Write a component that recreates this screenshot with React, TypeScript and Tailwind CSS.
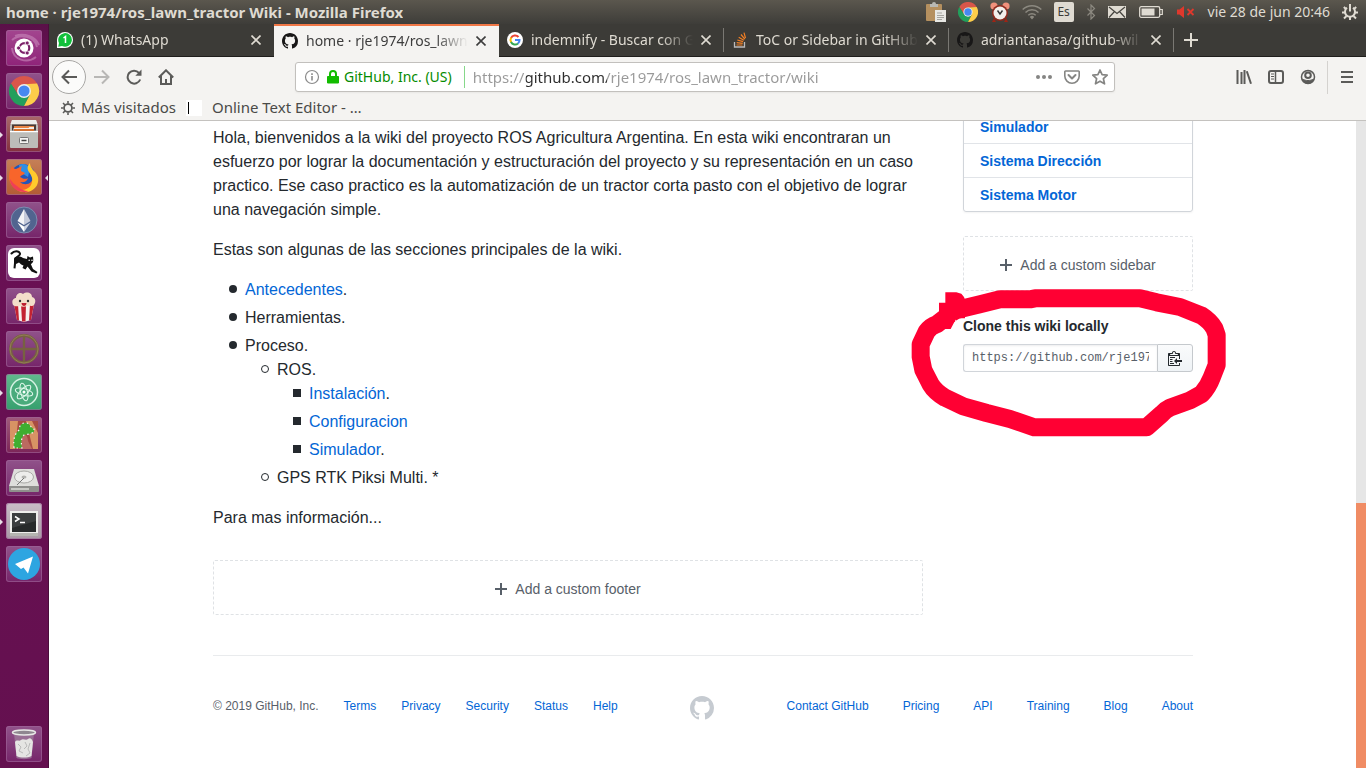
import React from "react";

const CHROME_FONT = "font-['Noto_Sans',sans-serif]";
const PAGE_FONT = "font-['Liberation_Sans',Arial,sans-serif]";

const MARK =
  "M8 0C3.58 0 0 3.58 0 8c0 3.54 2.29 6.53 5.47 7.59.4.07.55-.17.55-.38 0-.19-.01-.82-.01-1.49-2.01.37-2.53-.49-2.69-.94-.09-.23-.48-.94-.82-1.13-.28-.15-.68-.52-.01-.53.63-.01 1.08.58 1.23.82.72 1.21 1.87.87 2.33.66.07-.52.28-.87.51-1.07-1.78-.2-3.64-.89-3.64-3.95 0-.87.31-1.59.82-2.15-.08-.2-.36-1.02.08-2.12 0 0 .67-.21 2.2.82.64-.18 1.32-.27 2-.27.68 0 1.36.09 2 .27 1.53-1.04 2.2-.82 2.2-.82.44 1.1.16 1.92.08 2.12.51.56.82 1.27.82 2.15 0 3.07-1.87 3.75-3.65 3.95.29.25.54.73.54 1.48 0 1.07-.01 1.93-.01 2.2 0 .21.15.46.55.38A8.013 8.013 0 0 0 16 8c0-4.42-3.58-8-8-8z";

function GitHubMark({ className }: { className: string }) {
  return (
    <svg viewBox="0 0 16 16" fill="currentColor" className={className} aria-hidden="true">
      <path d={MARK} />
    </svg>
  );
}

function ChromeShapes() {
  return (
    <>
      <path d="M2.100 8A16 16 0 0 1 29.900 8L30 8.700H16L9.600 19.700z" fill="#d9564a" />
      <path d="M2.100 8 9.600 19.700 22.400 19.700 16 32A16 16 0 0 1 2.100 8z" fill="#229f5c" />
      <path d="M22.400 19.700 16 32A16 16 0 0 0 29.900 8L16 8.700z" fill="#fdcd4a" />
      <circle cx="16" cy="16" r="7.400" fill="#eee" />
      <circle cx="16" cy="16" r="5.900" fill="#4688f1" />
    </>
  );
}

/* ---------- system panel ---------- */

function SystemPanel() {
  return (
    <header className={`flex h-6 shrink-0 items-center justify-between bg-linear-to-b from-[#5b574e] to-[#3e3d39] pr-2 pl-1.5 text-[#dfdbd2] ${CHROME_FONT}`}>
      <h1 className="truncate text-[15px] leading-6 font-bold">home · rje1974/ros_lawn_tractor Wiki - Mozilla Firefox</h1>
      <div className="flex shrink-0 items-center gap-3">
        <svg viewBox="0 0 20 20" className="size-5">
          <rect x="0" y="2" width="16" height="17" rx="1" fill="#b5905f" />
          <path d="M4 2h2a2 2 0 0 1 4 0h2v3H4z" fill="#b9b9b4" />
          <rect x="9" y="8" width="11" height="12" fill="#e8e8e4" />
          <path d="M11 11h5M11 13.500h7M11 15.500h7M11 17.500h5" stroke="#a5a5a0" />
        </svg>
        <svg viewBox="0 0 32 32" className="size-5">
          <ChromeShapes />
        </svg>
        <svg viewBox="0 0 20 20" className="size-5">
          <circle cx="4" cy="4" r="3.600" fill="#f0917c" />
          <circle cx="16" cy="4" r="3.600" fill="#f0917c" />
          <path d="m4 16-2 4h4zM16 16l2 4h-4z" fill="#9d2415" />
          <circle cx="10" cy="11" r="8" fill="#8e2a1d" />
          <circle cx="10" cy="11" r="6.500" fill="#f3f0ec" />
          <path d="m7.500 8.500 2.500 3.500 2.500-3.500" stroke="#333" strokeWidth="1.400" fill="none" />
        </svg>
        <svg viewBox="0 0 20 16" className="h-4 w-5" fill="none" stroke="#8c8980" strokeWidth="1.500">
          <path d="M.7 5.500a13.500 13.500 0 0 1 18.600 0M3.500 8.500a9.300 9.300 0 0 1 13 0M6.300 11.300a5.300 5.300 0 0 1 7.400 0" />
          <path d="M10 15.500 7.800 13a3 3 0 0 1 4.400 0z" fill="#8c8980" stroke="none" />
        </svg>
        <button className="h-5 w-5 rounded-xs bg-[#dfdbd2] text-xs text-[#3c3b37]">Es</button>
        <svg viewBox="0 0 10 16" className="h-4 w-2.5" fill="none" stroke="#8c8980" strokeWidth="1.200">
          <path d="m1.500 4.500 7 7L5 15V1l3.500 3.500-7 7" />
        </svg>
        <svg viewBox="0 0 18 14" className="h-3.5 w-[18px]">
          <path d="M0 1h18v12H0z" fill="#dfdbd2" />
          <path d="m1 2 8 6.500L17 2M1 12.500l5.500-6M17 12.500l-5.500-6" fill="none" stroke="#45443f" strokeWidth="1.200" />
        </svg>
        <svg viewBox="0 0 24 12" className="mx-px h-3 w-6">
          <rect x=".7" y=".7" width="20" height="10.600" rx="1.500" fill="none" stroke="#dfdbd2" strokeWidth="1.300" />
          <path d="M2.500 2.500h13v7h-13z" fill="#dfdbd2" />
          <path d="M21 3.500h2.300v5H21" fill="none" stroke="#dfdbd2" strokeWidth="1.200" />
        </svg>
        <svg viewBox="0 0 20 14" className="h-3.5 w-5" fill="#df382c">
          <path d="M1 4.500h2.500L8 1v12L3.500 9.500H1z" />
          <path d="m11.500 4 6 6m0-6-6 6" stroke="#df382c" strokeWidth="1.800" />
        </svg>
        <time className="text-sm">vie 28 de jun 20:46</time>
        <svg viewBox="0 0 16 16" className="size-4" fill="none" stroke="#dfdbd2">
          <path d="M5 3.700a5 5 0 1 0 6 0" strokeWidth="2" />
          <path d="M8 0v7.500" strokeWidth="2" />
          <path d="M0 8.500h3M13 8.500h3M2 14.500l2.500-2.500M14 14.500 11.500 12M8 13v3M1.800 3 4 5M14.200 3 12 5" strokeWidth="2" />
        </svg>
      </div>
    </header>
  );
}

/* ---------- launcher ---------- */

type App = { name: string; tile: string; running?: boolean; focused?: boolean; art: React.ReactNode };

const GLASS = "bg-linear-to-b from-[#90528a] to-[#76256a]";

const APPS: App[] = [
  {
    name: "Dash",
    tile: "bg-linear-to-b from-[#a3458f] to-[#8f2379]",
    art: (
      <>
        <path d="M6 10C14 3 29 6 31 17M30 27C21 34 7 30 6 18M9 6c9-3 20 0 24 9" stroke="#c98abd" strokeWidth="2" fill="none" opacity=".6" />
        <circle cx="18" cy="18" r="9.500" fill="#fff" />
        <circle cx="18.500" cy="18" r="4.800" fill="none" stroke="#7a1f68" strokeWidth="2.200" />
        <g fill="#7a1f68" stroke="#fff" strokeWidth=".9">
          <circle cx="12.600" cy="18" r="2.100" />
          <circle cx="21.200" cy="13" r="2.100" />
          <circle cx="21.200" cy="23" r="2.100" />
        </g>
      </>
    ),
  },
  {
    name: "Google Chrome",
    tile: GLASS,
    art: (
      <g transform="translate(3 3) scale(.94)">
        <ChromeShapes />
      </g>
    ),
  },
  {
    name: "Archivos",
    tile: "bg-linear-to-b from-[#a8676a] to-[#84303f]",
    running: true,
    art: (
      <>
        <path d="M6 4h24l2 6v21a1 1 0 0 1-1 1H5a1 1 0 0 1-1-1V10z" fill="#bdbdb9" />
        <path d="M6 4h24l1.500 4h-27z" fill="#ecece9" />
        <path d="M6 8.500h24v6H6z" fill="#4b3b36" />
        <path d="M8 10h20v3H8z" fill="#e98545" />
        <path d="M7.500 12h15l1-1H28v3.500H7.500z" fill="#f5efe8" />
        <path d="M8 13h20v2H8z" fill="#d4702f" />
        <path d="M4 15h28v1.200H4z" fill="#fff" />
        <rect x="13.500" y="21.500" width="9" height="6" rx="1" fill="#f4f4f2" stroke="#777" />
        <path d="M15.500 24.500h5" stroke="#444" strokeWidth="1.500" />
      </>
    ),
  },
  {
    name: "Firefox",
    tile: "bg-linear-to-b from-[#c58057] to-[#b35b35]",
    running: true,
    focused: true,
    art: (
      <>
        <circle cx="17" cy="17" r="12" fill="#2456b8" />
        <path d="M13 6c4-2 8-1 11 3l-2 9-8-5z" fill="#2f8fe6" />
        <path d="M6 7c1 2 2 3 4 3 2-1 4-2 6-3-1 2-1 4-1 5l4 2c-1 2-4 2-5 4 2 1 5 3 8 1-1 4-5 5-8 4 3 3 8 3 11 0 3-3 3-8 1-12 6 3 8 13-2 20-12 4-21-4-21-13 0-4 1-8 3-11z" fill="#f8652b" />
        <path d="M24 4c0 3 1 4 3 7 4 4 6 7 5 12-1 6-7 11-14 10-3 0-5-1-7-2 8 1 14-2 15-8 1-4-1-7-3-10s-2-6 1-9z" fill="#ffca2c" />
        <path d="M4 20c0 7 6 13 14 13 2 0 4-.5 5-1-5 0-9-2-12-5-3-2-5-4-7-7z" fill="#ef3f56" />
      </>
    ),
  },
  {
    name: "Ethereum",
    tile: GLASS,
    art: (
      <>
        <circle cx="18" cy="18" r="13" fill="#51648f" stroke="#7e8bb0" />
        <path d="M18 7v16l-6.500-4z" fill="#f3f3f6" />
        <path d="M18 7v16l6.500-4z" fill="#c5cada" />
        <path d="M11.500 20.500 18 24.500V30z" fill="#fff" />
        <path d="M24.500 20.500 18 24.500V30z" fill="#cfd4e2" />
      </>
    ),
  },
  {
    name: "Gato",
    tile: GLASS,
    art: (
      <>
        <rect x="2" y="3" width="32" height="30" rx="6" fill="#fff" />
        <path d="M5.500 8.500C8 5.500 13 5.500 14 8.500c.5 3-5 3-5 6" fill="none" stroke="#111" strokeWidth="2" strokeLinecap="round" />
        <path d="M8 14c1-3 6-3 9-1l4 1 .5-3 2.500 1.500 3-1 .3 3.500c0 2-1 3.500-2.500 4l2.200 5 4.500 3-1 1.500-5-2-4-5-2 3-3-1.500 1-2.500c-2-.5-3.500-2-4.500-3l-3 1.500-.5 4.500-2-.2.500-5.300z" fill="#111" />
        <circle cx="23.200" cy="15.300" r=".8" fill="#fff" />
        <circle cx="26" cy="15.300" r=".8" fill="#fff" />
      </>
    ),
  },
  {
    name: "Popcorn Time",
    tile: GLASS,
    art: (
      <>
        <path d="m8 16 3 16 7 2 7-2 3-16z" fill="#f6f0ee" />
        <path d="m8 16 3 16 2 .6L12 16zM15 16l1 17.500h3.500L20 16zM24 16l-1 16.600 2-.6 3-16z" fill="#c32232" />
        <path d="M7 17c-2-5 1-7 3-7 0-5 5-6 7-4 4-3 9-1 9 3 4 1 4 5 2 8-2 2-5 0-7 1-2 1-5 1-7 0-2 0-5 1-7-1z" fill="#f3dfca" />
        <circle cx="14" cy="13" r="1.200" fill="#333" />
        <circle cx="22" cy="13" r="1.200" fill="#333" />
        <path d="M15.500 15h5c0 4-5 4-5 0z" fill="#bd2032" />
      </>
    ),
  },
  {
    name: "Mira",
    tile: GLASS,
    art: (
      <>
        <circle cx="18" cy="18" r="13.500" fill="none" stroke="#776141" strokeWidth="3" />
        <path d="M18 5v26M5 18h26" stroke="#776141" strokeWidth="2.400" />
        <circle cx="18" cy="18" r="14" fill="none" stroke="#a08a5d" strokeWidth=".7" />
      </>
    ),
  },
  {
    name: "Atom",
    tile: "bg-linear-to-b from-[#61b98d] to-[#35a06e]",
    running: true,
    art: (
      <>
        <circle cx="18" cy="18" r="13.500" fill="#49ab7c" stroke="#d5f1e3" strokeWidth="1.500" />
        <g fill="none" stroke="#ddf6e9" strokeWidth="1.100">
          <ellipse cx="18" cy="18" rx="9" ry="3.400" transform="rotate(15 18 18)" />
          <ellipse cx="18" cy="18" rx="9" ry="3.400" transform="rotate(75 18 18)" />
          <ellipse cx="18" cy="18" rx="9" ry="3.400" transform="rotate(135 18 18)" />
        </g>
        <circle cx="18" cy="18" r="1.500" fill="#fff" />
      </>
    ),
  },
  {
    name: "Recortes",
    tile: "bg-linear-to-b from-[#a05a7b] to-[#7c2458]",
    art: (
      <>
        <path d="M4 4h28v28H4z" fill="#a84b43" />
        <path d="M4 4h8l-3 28H4zM20 4h6l6 12v16h-5z" fill="#d79364" />
        <path d="M14 18c3-4 8 0 8 6l4 8H13z" fill="#bb6a60" />
        <path d="M8 31c-1-10 1-14 5-18 0-5 4-8 8-7 3 1 4 5 7 6v3c-5 3-8 2-10 3-3 3-3 8-2 13z" fill="#3fae30" />
        <path d="M8 31c-1-10 1-14 5-18 0-5 4-8 8-7 3 1 4 5 7 6v3c-5 3-8 2-10 3-3 3-3 8-2 13z" fill="none" stroke="#f5f5f5" strokeWidth="1.200" strokeDasharray="1.500 3" />
      </>
    ),
  },
  {
    name: "Disco",
    tile: GLASS,
    art: (
      <>
        <path d="M8 9h20l5 17H3z" fill="#dededb" />
        <ellipse cx="18" cy="17" rx="9.500" ry="6" fill="#ededeb" stroke="#a9a9a6" />
        <ellipse cx="18" cy="17" rx="2.500" ry="1.500" fill="#b3b3b0" />
        <path d="M3 26h30v5a1 1 0 0 1-1 1H4a1 1 0 0 1-1-1z" fill="#8f8f8c" />
        <path d="M5 28h18v2H5z" fill="#c8c8c4" />
        <path d="m11 25 7-7" stroke="#777" />
      </>
    ),
  },
  {
    name: "Terminal",
    tile: "bg-linear-to-b from-[#c9bcc6] to-[#a99aa6]",
    running: true,
    art: (
      <>
        <path d="M4 8h28v25H4z" fill="#eeeeec" />
        <path d="M4 30h28v3H4z" fill="#b5b5b1" />
        <path d="M6 10h24v19H6z" fill="#272a2b" />
        <path d="M6 10h24v8L6 25z" fill="#3b3e3f" />
        <path d="m9 13.500 4 2.500-4 2.500M14 19.500h5" stroke="#fff" strokeWidth="1.500" fill="none" />
      </>
    ),
  },
  {
    name: "Telegram",
    tile: GLASS,
    art: (
      <>
        <circle cx="18" cy="18" r="16" fill="#2da5e1" />
        <path d="M9 18 27 10.500 22 27.500 17.500 21.500 15 23z" fill="#fff" />
      </>
    ),
  },
];

const TRASH: App = {
  name: "Papelera",
  tile: GLASS,
  art: (
    <>
      <path d="m8 7 2.500 25c3 1.500 12 1.500 15 0L28 7z" fill="#9d7b9a" opacity=".8" />
      <path d="M9 16c2-3 4 0 6-2s5 1 7-1 4 0 5 3l-1.500 14c-4 2-11 2-15 0z" fill="#e5e5e3" />
      <path d="m12 18 3 3-2 4 4 2M19 16l2 4-3 3M24 17l-2 6 2 4-4 3" stroke="#b9b9b9" fill="none" />
      <ellipse cx="18" cy="6.500" rx="11.500" ry="2.500" fill="#8f8790" stroke="#e8e8e6" strokeWidth="1.500" />
    </>
  ),
};

function LauncherTile({ app }: { app: App }) {
  return (
    <li className="relative flex justify-center">
      {app.running && <span className="absolute top-4 left-0 border-y-[3px] border-l-[3px] border-y-transparent border-l-[#e8dfe6]" />}
      <button aria-label={app.name} className={`size-9 overflow-hidden rounded-[3px] ring-1 ring-[#a0669a]/60 ring-inset ${app.tile}`}>
        <svg viewBox="0 0 36 36" className="size-9">{app.art}</svg>
      </button>
      {app.focused && <span className="absolute top-4 right-0 border-y-[3px] border-r-[3px] border-y-transparent border-r-[#e8dfe6]" />}
    </li>
  );
}

function Launcher() {
  return (
    <nav aria-label="Lanzador" className="flex w-[49px] shrink-0 flex-col justify-between border-r border-[#4b0d3b] bg-linear-to-b from-[#5a1048] via-[#6b1055] via-5% to-[#64104f] pt-1.5 pb-1.5">
      <ul className="flex flex-col gap-[7px]">
        {APPS.map((app) => (
          <LauncherTile key={app.name} app={app} />
        ))}
      </ul>
      <ul>
        <LauncherTile app={TRASH} />
      </ul>
    </nav>
  );
}

/* ---------- browser chrome ---------- */

const TABS = [
  {
    title: "(1) WhatsApp",
    icon: (
      <svg viewBox="0 0 16 16" className="size-4 shrink-0">
        <path d="M0 16V8a8 8 0 1 1 8 8z" fill="#fff" />
        <path d="M1.300 14.700 2 11a6.800 6.800 0 1 1 3 3z" fill="#12c03b" />
        <path d="m6.500 6 2-1.500V11" stroke="#fff" strokeWidth="1.500" fill="none" />
      </svg>
    ),
  },
  { title: "home · rje1974/ros_lawn", active: true, icon: <GitHubMark className="size-4 shrink-0 text-[#181717]" /> },
  {
    title: "indemnify - Buscar con G",
    icon: (
      <svg viewBox="0 0 16 16" className="size-4 shrink-0" fill="none" strokeWidth="2">
        <circle cx="8" cy="8" r="8" fill="#fff" />
        <path d="M11.500 5A4.500 4.500 0 0 0 4 6" stroke="#ea4335" />
        <path d="M4.200 5.600a4.600 4.600 0 0 0 0 4.800" stroke="#fbbc05" />
        <path d="M4 10a4.500 4.500 0 0 0 7 1.400" stroke="#34a853" />
        <path d="M11 11.500A4.500 4.500 0 0 0 12.500 8H8" stroke="#4285f4" />
      </svg>
    ),
  },
  {
    title: "ToC or Sidebar in GitHub",
    icon: (
      <svg viewBox="0 0 16 16" className="size-4 shrink-0" fill="none">
        <path d="M2.500 10v5h10v-5" stroke="#bcbbbb" strokeWidth="1.300" />
        <path d="M4.500 13h6M4.700 10.700l6 .6M5.300 8l5.800 1.600M6.700 5.200l5.200 3M9 2.500l3.800 4.600M12 .7l1.500 5.500" stroke="#f48024" strokeWidth="1.200" />
      </svg>
    ),
  },
  { title: "adriantanasa/github-wil", icon: <GitHubMark className="size-4 shrink-0 text-[#181717]" /> },
];

function TabStrip() {
  return (
    <div className="flex h-[33px] shrink-0 bg-[#3c3b37]">
      {TABS.map((tab, i) => (
        <div
          key={tab.title}
          className={
            tab.active
              ? "flex w-[225px] items-center gap-2 border-t-2 border-[#f07746] bg-[#f4f3f1] pb-0.5 pl-2 text-[#3d3d3d]"
              : "flex w-[225px] items-center gap-2 border-b border-[#1f1e1c] pl-2 text-[#dfdbd2]"
          }
        >
          {tab.icon}
          <button className="min-w-0 flex-1 overflow-hidden mask-r-from-80% text-left text-sm whitespace-nowrap">{tab.title}</button>
          <button aria-label="Cerrar pestaña">
            <svg viewBox="0 0 10 10" className="size-2.5" stroke="currentColor" strokeWidth="1.600">
              <path d="m.5.500 9 9m0-9-9 9" />
            </svg>
          </button>
          <span className={i > 1 ? "ml-1 h-6 w-px bg-[#7a7873]" : "ml-1 h-6 w-px"} />
        </div>
      ))}
      <button aria-label="Nueva pestaña" className="flex flex-1 items-center border-b border-[#1f1e1c] pl-2.5 text-[#dfdbd2]">
        <svg viewBox="0 0 14 14" className="size-3.5" stroke="currentColor" strokeWidth="2">
          <path d="M7 0v14M0 7h14" />
        </svg>
      </button>
    </div>
  );
}

function ToolbarButton({ label, children }: { label: string; children: React.ReactNode }) {
  return (
    <button aria-label={label} className="flex size-8 items-center justify-center">
      <svg viewBox="0 0 16 16" className="size-4" fill="none" stroke="currentColor" strokeWidth="2">
        {children}
      </svg>
    </button>
  );
}

function Toolbar() {
  return (
    <div className="flex h-10 shrink-0 items-center bg-[#f4f3f1] px-[3px] text-[#5b5b59]">
      <button aria-label="Atrás" className="flex size-[34px] items-center justify-center rounded-full border border-[#a8a7a5] bg-[#fbfbfa]">
        <svg viewBox="0 0 16 16" className="size-4" fill="none" stroke="currentColor" strokeWidth="2">
          <path d="M16 8H1.500M8 1.500 1.500 8 8 14.500" />
        </svg>
      </button>
      <div className="flex">
        <span className="text-[#b8b7b5]">
          <ToolbarButton label="Adelante">
            <path d="M0 8h14.500M8 1.500 14.500 8 8 14.500" />
          </ToolbarButton>
        </span>
        <ToolbarButton label="Recargar">
          <path d="M14.200 10.500A6.500 6.500 0 1 1 13 3.800" />
          <path d="M15.500.5v6.200H9.300z" fill="currentColor" stroke="none" />
        </ToolbarButton>
        <ToolbarButton label="Inicio">
          <path d="M.8 8.500 8 1.300l7.200 7.200" />
          <path d="M3 7v8h10V7M8 15v-5" />
        </ToolbarButton>
      </div>
      <div className="min-w-4 flex-1" />
      <div className="flex h-[30px] w-[820px] min-w-0 shrink items-center rounded-[3px] border border-[#c2c0bd] bg-white pl-2 shadow-xs">
        <svg viewBox="0 0 16 16" className="size-4 shrink-0" fill="none" stroke="#8a8a8a">
          <circle cx="8" cy="8" r="6.500" strokeWidth="1.200" />
          <path d="M8 7v4.500M8 4.300V6" strokeWidth="1.600" />
        </svg>
        <svg viewBox="0 0 14 16" className="ml-1.5 h-4 w-3.5 shrink-0">
          <path d="M1.500 7.500h11v6.500h-11z" fill="#12bc00" stroke="#12bc00" strokeLinejoin="round" />
          <path d="M4 7V5a3 3 0 0 1 6 0v2" fill="none" stroke="#12bc00" strokeWidth="2" />
        </svg>
        <span className="ml-1 shrink-0 text-sm text-[#058b00]">GitHub, Inc. (US)</span>
        <span className="mr-2 ml-3 h-[22px] w-px shrink-0 bg-[#86d88a]" />
        <input
          aria-label="Dirección"
          defaultValue="https://github.com/rje1974/ros_lawn_tractor/wiki"
          className="min-w-0 flex-1 bg-[linear-gradient(to_right,#999_0_53px,#2c2c2c_53px_134px,#999_134px)] bg-clip-text text-[15px] text-transparent outline-none"
        />
        <div className="flex shrink-0 text-[#858583]">
          <button aria-label="Acciones" className="flex size-7 items-center justify-center">
            <svg viewBox="0 0 16 16" className="size-4" fill="currentColor">
              <circle cx="2" cy="8" r="2" />
              <circle cx="8" cy="8" r="2" />
              <circle cx="14" cy="8" r="2" />
            </svg>
          </button>
          <button aria-label="Pocket" className="flex size-7 items-center justify-center">
            <svg viewBox="0 0 16 16" className="size-4" fill="none" stroke="currentColor" strokeWidth="1.600" strokeLinejoin="round">
              <path d="M1.500 2h13a.7.7 0 0 1 .7.700V7A7.200 7.200 0 0 1 .8 7V2.700A.7.7 0 0 1 1.500 2z" />
              <path d="m4.500 6 3.500 3.500L11.500 6" strokeLinecap="round" strokeWidth="2" />
            </svg>
          </button>
          <button aria-label="Marcador" className="flex size-7 items-center justify-center">
            <svg viewBox="0 0 16 16" className="size-4" fill="none" stroke="currentColor" strokeWidth="1.700" strokeLinejoin="round">
              <path d="m8 1 2.100 4.700 5.100.5-3.800 3.500 1.100 5.100L8 12.200l-4.500 2.600 1.100-5.100L.8 6.200l5.100-.5z" />
            </svg>
          </button>
        </div>
      </div>
      <div className="min-w-4 flex-1" />
      <div className="flex shrink-0 items-center">
        <ToolbarButton label="Biblioteca">
          <path d="M1.500 1v14M5.500 3v12M8.500 1v14M10.800 2.300l4.200 12.400" />
        </ToolbarButton>
        <ToolbarButton label="Barra lateral">
          <rect x="1" y="2" width="14" height="12" rx="2" />
          <path d="M7.500 2v12" strokeWidth="1.500" />
          <path d="M3 5h3M3 7.500h3M3 10h3" strokeWidth="1" />
        </ToolbarButton>
        <ToolbarButton label="Cuenta">
          <circle cx="8" cy="8" r="6.500" strokeWidth="1.500" />
          <circle cx="8" cy="6.300" r="2.800" />
          <path d="M2.500 10c3 2 8 2 11 0-1 3-3 4.500-5.500 4.500S3.500 13 2.500 10z" fill="currentColor" strokeWidth="1" />
        </ToolbarButton>
        <span className="mx-[3px] h-[33px] w-px bg-[#d4d2cf]" />
        <ToolbarButton label="Menú">
          <path d="M2 3h12M2 8h12M2 13h12" />
        </ToolbarButton>
      </div>
    </div>
  );
}

function BookmarksBar() {
  return (
    <div className="flex h-6 shrink-0 items-center border-b border-[#c4c2bf] bg-[#f4f3f1] pb-0.5 pl-3 text-[15px] text-[#4a4a48]">
      <button className="flex items-center gap-1.5">
        <svg viewBox="0 0 16 16" className="size-3.5" fill="none" stroke="#5b5b59">
          <circle cx="8" cy="8" r="4.500" strokeWidth="2" />
          <path d="M8 0v3M8 13v3M0 8h3M13 8h3M2.300 2.300l2.200 2.200M11.500 11.500l2.200 2.200M2.300 13.700l2.200-2.200M11.500 4.500l2.200-2.200" strokeWidth="1.800" />
        </svg>
        Más visitados
      </button>
      <button className="ml-2.5 flex items-center gap-2.5">
        <svg viewBox="0 0 16 16" className="size-4">
          <path d="M0 0h16v16H0z" fill="#fff" />
          <path d="M2.500 2v12" stroke="#000" />
        </svg>
        Online Text Editor - …
      </button>
    </div>
  );
}

/* ---------- wiki page ---------- */

const BULLET = "relative before:absolute before:top-[7px] before:-left-4 before:size-2";
const DISC = `${BULLET} before:rounded-full before:bg-[#24292e]`;
const RING = `${BULLET} before:rounded-full before:border before:border-[#24292e]`;
const SQUARE = `${BULLET} before:bg-[#24292e]`;

function A({ children }: { children: React.ReactNode }) {
  return <a href="#" className="text-[#0366d6] hover:underline">{children}</a>;
}

function AddCustom({ label, margin }: { label: string; margin: string }) {
  return (
    <a href="#" className={`flex h-[55px] items-center justify-center gap-2 rounded-xs border border-dashed border-[#dfe2e5] pt-0.5 text-sm text-[#586069] ${margin}`}>
      <svg viewBox="0 0 12 16" className="h-4 w-3" fill="currentColor">
        <path d="M12 9H7v5H5V9H0V7h5V2h2v5h5v2z" />
      </svg>
      {label}
    </a>
  );
}

function Article() {
  return (
    <article className="min-w-0 flex-1 pt-[5px] text-base leading-6 text-[#24292e]">
      <p className="mb-4">
        Hola, bienvenidos a la wiki del proyecto ROS Agricultura Argentina. En esta wiki encontraran un esfuerzo por lograr la
        documentación y estructuración del proyecto y su representación en un caso practico. Ese caso practico es la
        automatización de un tractor corta pasto con el objetivo de lograr una navegación simple.
      </p>
      <p className="mb-4">Estas son algunas de las secciones principales de la wiki.</p>
      <ul className="mb-4 space-y-1 pl-8">
        <li className={DISC}><A>Antecedentes</A>.</li>
        <li className={DISC}>Herramientas.</li>
        <li className={DISC}>
          Proceso.
          <ul className="space-y-1 pl-8">
            <li className={RING}>
              ROS.
              <ul className="space-y-1 pl-8">
                <li className={SQUARE}><A>Instalación</A>.</li>
                <li className={SQUARE}><A>Configuracion</A></li>
                <li className={SQUARE}><A>Simulador</A>.</li>
              </ul>
            </li>
            <li className={RING}>GPS RTK Piksi Multi. *</li>
          </ul>
        </li>
      </ul>
      <p>Para mas información...</p>
      <AddCustom label="Add a custom footer" margin="mt-[30px]" />
    </article>
  );
}

function RedCircle() {
  return (
    <svg viewBox="30 516 951 453" className="pointer-events-none absolute -top-7 -left-[53px] h-[151px] w-[317px] max-w-none" aria-hidden="true">
      <path
        d="M150 597Q165 583 190 580L240 568 300 553H390L405 550H720L770 562 840 576 905 602Q930 618 943 640L950 660V750L935 788Q925 815 905 837L870 856 810 878Q795 885 785 897L740 937H402L330 912 260 894 190 874 135 848Q105 830 92 808L70 765 62 725V688L80 650Q92 634 110 628L150 597"
        fill="none"
        stroke="#ff0033"
        strokeWidth="54"
        strokeLinejoin="round"
      />
      <path d="M136 532h33l15 4 8 10 3 8v56h-26l-17 32h-30l-5-42V563h19z" fill="#ff0033" />
    </svg>
  );
}

function WikiSidebar() {
  const row = "flex items-center pl-4 text-[#0366d6]";
  return (
    <aside className="w-[230px] shrink-0 text-sm">
      <ul className="-mt-3 divide-y divide-[#e1e4e8] rounded-[3px] border border-[#d1d5da] font-bold shadow-xs">
        <li><a href="#" className={`h-[33px] ${row}`}>Simulador</a></li>
        <li><a href="#" className={`h-[33px] ${row}`}>Sistema Dirección</a></li>
        <li><a href="#" className={`h-[33px] ${row}`}>Sistema Motor</a></li>
      </ul>
      <AddCustom label="Add a custom sidebar" margin="mt-6" />
      <section className="relative mt-6">
        <label htmlFor="clone-url" className="mb-[7px] block leading-[22px] font-bold text-[#24292e]">Clone this wiki locally</label>
        <div className="flex h-7">
          <input
            id="clone-url"
            readOnly
            value="https://github.com/rje1974/ros_lawn_tractor.wiki.git"
            className="min-w-0 flex-1 rounded-l-[3px] border border-r-0 border-[#d1d5da] bg-white px-2 font-['Liberation_Mono',monospace] text-xs text-[#586069] shadow-[inset_0_1px_2px_rgba(27,31,35,0.075)] outline-none"
          />
          <button aria-label="Copiar" className="flex w-9 items-center justify-center rounded-r-[3px] border border-[#c5c9cd] bg-linear-to-b from-[#fafbfc] to-[#eff3f6] text-[#24292e]">
            <svg viewBox="0 0 14 16" className="h-4 w-3.5" fill="currentColor">
              <path d="M2 13h4v1H2v-1zm5-6H2v1h5V7zm2 3V8l-3 3 3 3v-2h5v-2H9zM4.500 9H2v1h2.500V9zM2 12h2.500v-1H2v1zm9 1h1v2c-.02.28-.11.52-.3.700-.19.18-.42.28-.7.300H1c-.55 0-1-.45-1-1V4c0-.55.45-1 1-1h3c0-1.110.89-2 2-2 1.110 0 2 .89 2 2h3c.55 0 1 .45 1 1v5h-1V6H1v9h10v-2zM2 5h8c0-.55-.45-1-1-1H8c-.55 0-1-.45-1-1s-.45-1-1-1-1 .45-1 1-.45 1-1 1H3c-.55 0-1 .45-1 1z" />
            </svg>
          </button>
        </div>
        <RedCircle />
      </section>
    </aside>
  );
}

function SiteFooter() {
  return (
    <footer className="mt-10 flex justify-between border-t border-[#e9ebed] pt-10 text-xs leading-5 text-[#586069]">
      <ul className="flex gap-[25px]">
        <li>© 2019 GitHub, Inc.</li>
        {["Terms", "Privacy", "Security", "Status", "Help"].map((t) => (
          <li key={t}><A>{t}</A></li>
        ))}
      </ul>
      <GitHubMark className="size-6 text-[#c6cbd1]" />
      <ul className="flex gap-[34px]">
        {["Contact GitHub", "Pricing", "API", "Training", "Blog", "About"].map((t) => (
          <li key={t}><A>{t}</A></li>
        ))}
      </ul>
    </footer>
  );
}

export default function App() {
  return (
    <div className="flex h-screen flex-col overflow-hidden bg-white">
      <SystemPanel />
      <div className="flex min-h-0 flex-1">
        <Launcher />
        <div className={`flex min-w-0 flex-1 flex-col ${CHROME_FONT}`}>
          <TabStrip />
          <Toolbar />
          <BookmarksBar />
          <div className={`flex min-h-0 flex-1 ${PAGE_FONT}`}>
            <main className="min-w-0 flex-1 overflow-hidden pl-px">
              <div className="mx-auto max-w-[980px]">
                <div className="flex gap-10">
                  <Article />
                  <WikiSidebar />
                </div>
                <SiteFooter />
              </div>
            </main>
            <div className="flex w-2.5 shrink-0 flex-col justify-end bg-[#e6e6e6]">
              <div className="h-[41%] bg-[#f08c64]" />
            </div>
          </div>
        </div>
      </div>
    </div>
  );
}
